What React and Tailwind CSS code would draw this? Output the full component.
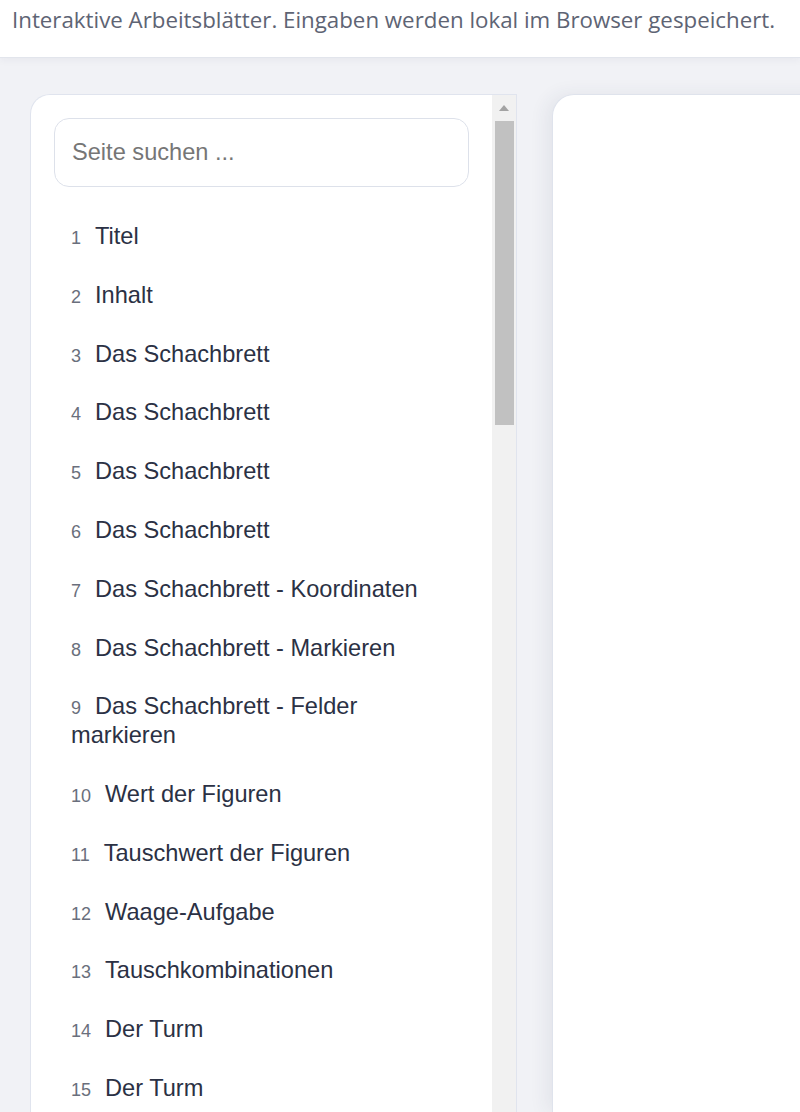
import React from 'react';

const pages = [
  'Titel',
  'Inhalt',
  'Das Schachbrett',
  'Das Schachbrett',
  'Das Schachbrett',
  'Das Schachbrett',
  'Das Schachbrett - Koordinaten',
  'Das Schachbrett - Markieren',
  'Das Schachbrett - Felder markieren',
  'Wert der Figuren',
  'Tauschwert der Figuren',
  'Waage-Aufgabe',
  'Tauschkombinationen',
  'Der Turm',
  'Der Turm',
];

const App = () => {
  return (
    <div className="h-[1112px] overflow-hidden bg-[#f1f2f6] flex flex-col">
      {/* Header */}
      <header className="h-[58px] flex-none bg-white border-b border-[#e2e5ec] shadow-[0_2px_8px_rgba(30,40,80,0.05)] px-[12px] pt-[5px]">
        <p className="font-['Open_Sans',sans-serif] text-[22.3px] leading-[30px] text-[#5e6474]">
          Interaktive Arbeitsblätter. Eingaben werden lokal im Browser gespeichert.
        </p>
      </header>

      <main className="flex-1 min-h-0 flex gap-[35px] pl-[30px] pt-[36px] overflow-hidden">
        {/* Sidebar */}
        <aside className="w-[487px] flex-none flex bg-white rounded-tl-[20px] border-t border-l border-r border-[#e0e4ee] overflow-hidden">
          <div className="flex-1 min-w-0 pl-[23px] pr-[23px] pt-[23px] font-['Liberation_Sans',Arial,sans-serif]">
            <input
              type="text"
              placeholder="Seite suchen ..."
              className="w-full h-[69px] rounded-[15px] border border-[#dde1ea] px-[17px] text-[23.6px] text-[#333] placeholder:text-[#767676] outline-none"
            />
            <ul className="mt-[20px]">
              {pages.map((title, i) => (
                <li key={i} className="px-[17px] py-[15px] text-[23.6px] leading-[28.8px] text-[#2b3144]">
                  <span className="text-[18px] leading-none text-[#6a6f7c] mr-[14px]">{i + 1}</span>
                  {title}
                </li>
              ))}
            </ul>
          </div>
          {/* Scrollbar */}
          <div className="w-[24px] flex-none bg-[#f1f1f1] flex flex-col items-center">
            <div className="h-[26px] flex items-center justify-center">
              <div className="w-0 h-0 border-l-[5px] border-r-[5px] border-b-[6px] border-l-transparent border-r-transparent border-b-[#a3a3a3]" />
            </div>
            <div className="w-[19px] h-[304px] bg-[#c1c1c1]" />
          </div>
        </aside>

        {/* Content */}
        <section className="w-[400px] flex-none bg-white rounded-tl-[22px] border-t border-l border-[#dfe3ec] shadow-[-6px_0_18px_rgba(40,50,90,0.07)]" />
      </main>
    </div>
  );
};

export default App;
